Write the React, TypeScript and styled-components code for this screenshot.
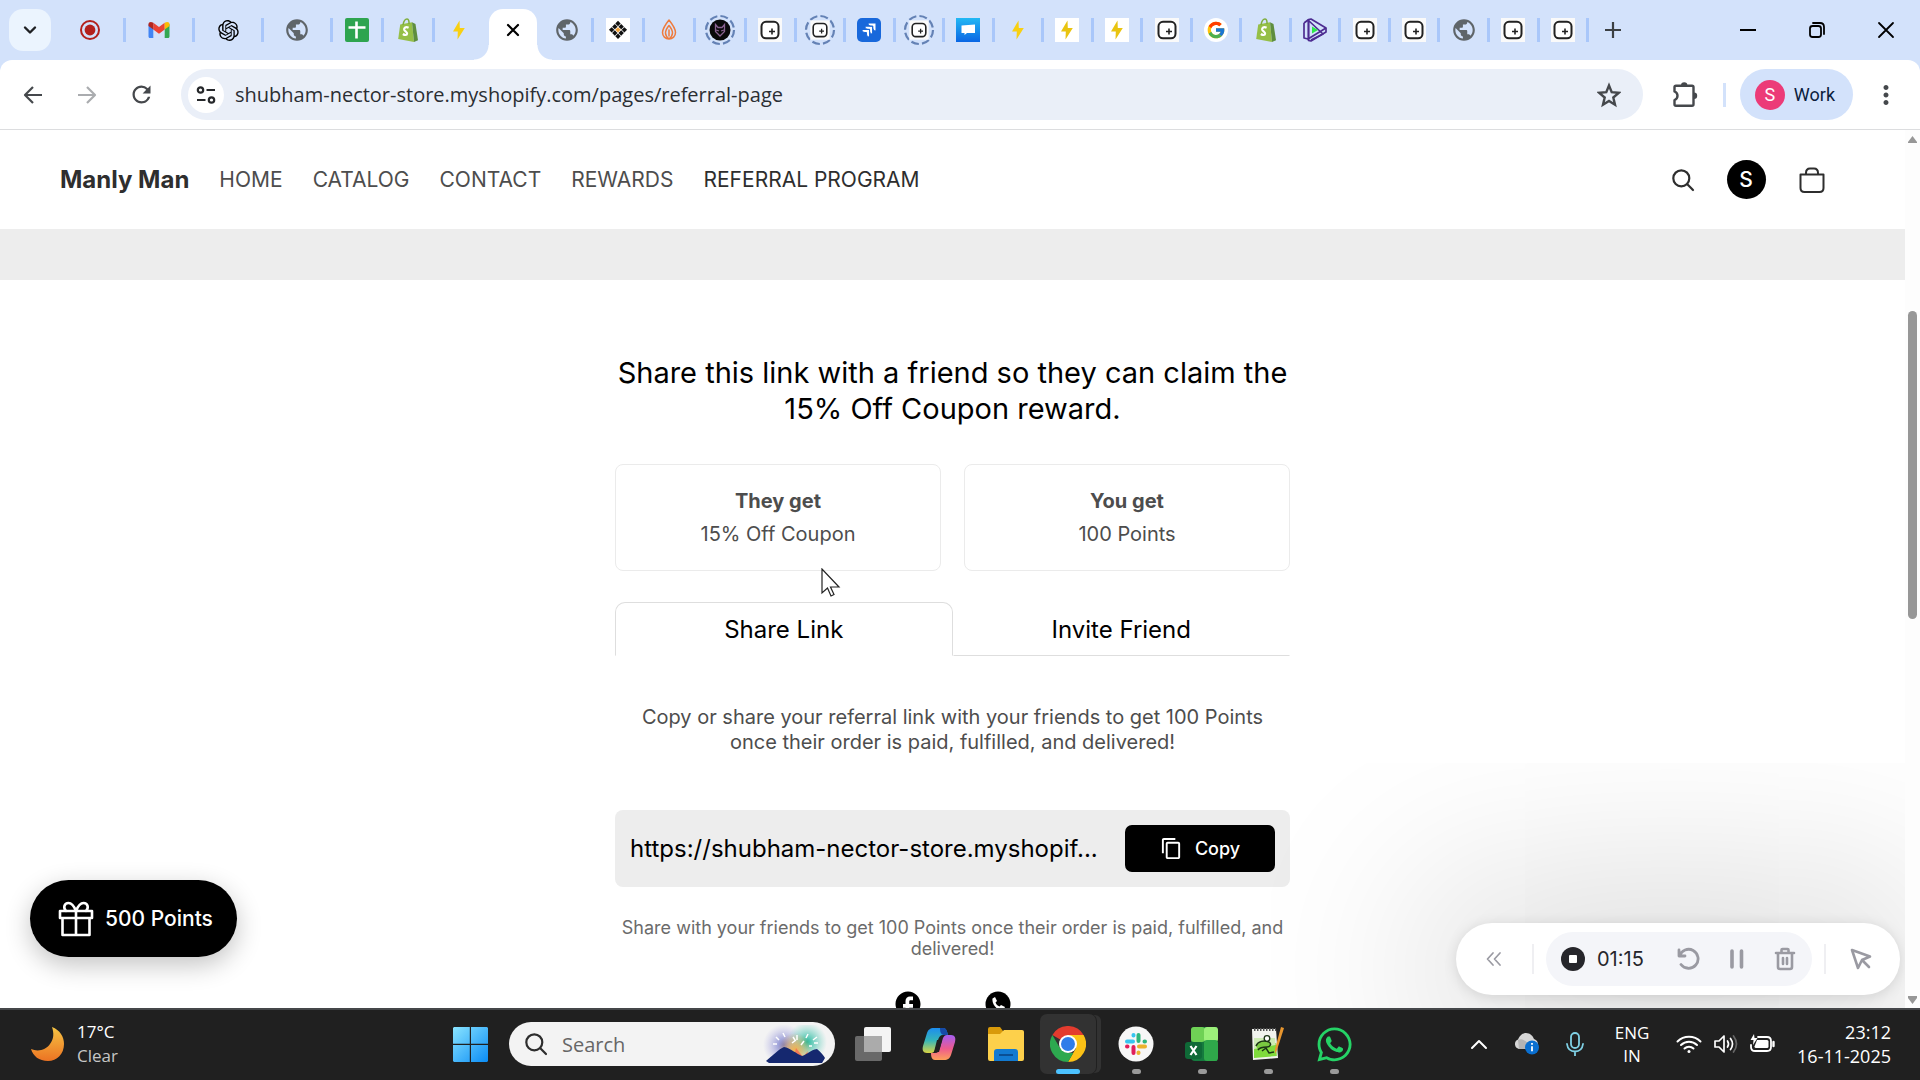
import React from "react";
import styled, { createGlobalStyle, css } from "styled-components";
import { FcGoogle } from "react-icons/fc";
import { RiOpenaiFill } from "react-icons/ri";
import { FaWhatsapp } from "react-icons/fa";
import { MdPublic, MdContentCopy, MdFacebook, MdMoreVert, MdRefresh } from "react-icons/md";

const ui = `"Open Sans", "Noto Sans", sans-serif`;
const store = `Inter, "Liberation Sans", sans-serif`;

const GlobalStyle = createGlobalStyle`
  *, *::before, *::after { box-sizing: border-box; }
  body { margin: 0; font-family: ${store}; background: #fff; overflow: hidden; }
  button, input { font: inherit; color: inherit; border: 0; padding: 0; margin: 0; background: none; outline: none; }
  button { cursor: pointer; }
  a { color: inherit; text-decoration: none; }
  h1, h2, p { margin: 0; }
  svg { display: block; flex: none; }
`;

const Desktop = styled.div`
  height: 100vh;
  display: flex;
  flex-direction: column;
`;

/* ---------- browser chrome ---------- */
const TabStrip = styled.div`
  height: 60px;
  flex: none;
  display: flex;
  align-items: center;
  background: #d3e2fb;
  padding-left: 9px;
`;
const TabSearch = styled.button`
  width: 42px;
  height: 42px;
  margin-right: 6px;
  border-radius: 14px;
  background: #ebf4fe;
  display: grid;
  place-items: center;
`;
const Tab = styled.button<{ $width?: number; $last?: boolean }>`
  ${(p) => (p.$width ? `width: ${p.$width}px; flex: none;` : "flex: 1;")}
  height: 24px;
  display: flex;
  align-items: center;
  justify-content: center;
  border-right: 3px solid ${(p) => (p.$last ? "transparent" : "#a9c7fa")};
`;
const EvenTabs = styled.div`
  flex: 0 1 842px;
  display: flex;
`;
const ActiveTab = styled.div`
  position: relative;
  width: 48px;
  height: 51px;
  margin: 0 6px 0 3px;
  align-self: flex-end;
  flex: none;
  display: flex;
  align-items: center;
  padding-bottom: 9px;
  background: #fff;
  border-radius: 14px 14px 0 0;
  &::before, &::after {
    content: "";
    position: absolute;
    bottom: 0;
    width: 15px;
    height: 15px;
  }
  &::before { right: 100%; background: radial-gradient(circle at 0 0, transparent 14px, #fff 15px); }
  &::after { left: 100%; background: radial-gradient(circle at 100% 0, transparent 14px, #fff 15px); }
`;
const GhostButton = styled.button<{ $w?: number }>`
  width: ${(p) => p.$w ?? 48}px;
  height: 48px;
  flex: none;
  display: grid;
  place-items: center;
`;
const WindowControls = styled.div`
  margin-left: auto;
  display: flex;
`;
const ToolbarBack = styled.div`
  flex: none;
  background: #d3e2fb;
`;
const Toolbar = styled.div`
  height: 70px;
  display: flex;
  align-items: center;
  padding: 0 10px 0 6px;
  background: #fff;
  border-radius: 12px 12px 0 0;
  border-bottom: 1px solid #dcdddf;
`;
const AddressBar = styled.label`
  flex: 1;
  height: 51px;
  margin: 0 18px 0 13px;
  display: flex;
  align-items: center;
  padding: 0 22px 0 7px;
  border-radius: 26px;
  background: #eaeff8;
`;
const SiteInfo = styled.button`
  width: 36px;
  height: 36px;
  margin-right: 11px;
  border-radius: 50%;
  background: #fff;
  display: grid;
  place-items: center;
`;
const AddressInput = styled.input`
  flex: 1;
  min-width: 0;
  height: 36px;
  font-family: ${ui};
  font-size: 20px;
  color: #2b2e33;
`;
const ToolbarRule = styled.span`
  width: 3px;
  height: 24px;
  margin: 0 14px;
  background: #d3e2fb;
`;
const Profile = styled.button`
  height: 51px;
  display: flex;
  align-items: center;
  gap: 9px;
  padding: 0 18px 0 15px;
  margin-right: 9px;
  border-radius: 26px;
  background: #d3e2fb;
  color: #0b1d3d;
  font-family: Roboto, sans-serif;
  font-size: 18px;
`;
const ProfileBadge = styled.span`
  width: 30px;
  height: 30px;
  border-radius: 50%;
  background: #ec3b78;
  color: #fff;
  display: grid;
  place-items: center;
`;

/* ---------- store page ---------- */
const Viewport = styled.div`
  position: relative;
  flex: 1;
  min-height: 0;
  display: flex;
  overflow: hidden;
  background: #fff;
`;
const Page = styled.div`
  flex: 1;
  min-width: 0;
`;
const ScrollTrack = styled.div`
  width: 15px;
  display: flex;
  flex-direction: column;
  align-items: center;
  padding: 6px 0 4px;
  background: #fdfdfd;
  z-index: 1;
`;
const ScrollSpace = styled.div<{ $grow: number }>`
  flex: ${(p) => p.$grow};
`;
const ScrollThumb = styled.div`
  flex: 309;
  width: 9px;
  border-radius: 5px;
  background: #979797;
`;
const Header = styled.header`
  height: 99px;
  display: flex;
  align-items: center;
  padding: 0 66px 0 60px;
`;
const Brand = styled.a`
  font-size: 24px;
  font-weight: 700;
  color: #2e2e2e;
  margin-right: 30px;
`;
const Nav = styled.nav`
  display: flex;
  gap: 30px;
  font-size: 21px;
  color: #4d4d4d;
`;
const NavLink = styled.a<{ $current?: boolean }>`
  ${(p) => p.$current && css`color: #2e2e2e;`}
`;
const HeaderActions = styled.div`
  margin-left: auto;
  display: flex;
  align-items: center;
  gap: 12px;
`;
const Avatar = styled.span`
  width: 39px;
  height: 39px;
  border-radius: 50%;
  background: #000;
  color: #fff;
  font-size: 21px;
  font-weight: 500;
  display: grid;
  place-items: center;
`;
const Band = styled.div`
  height: 51px;
  background: #ededed;
`;
const Referral = styled.main`
  width: 675px;
  margin: 0 auto;
  padding-top: 75px;
  text-align: center;
`;
const Title = styled.h1`
  font-size: 29px;
  font-weight: 400;
  line-height: 36px;
  color: #000;
`;
const Cards = styled.div`
  display: grid;
  grid-template-columns: 1fr 1fr;
  gap: 23px;
  margin: 37px 0 31px;
`;
const Card = styled.section`
  height: 107px;
  border: 1px solid #ebebeb;
  border-radius: 8px;
  display: flex;
  flex-direction: column;
  justify-content: center;
  gap: 9px;
  font-size: 20px;
  line-height: 24px;
  color: #4d4d4d;
`;
const CardTitle = styled.h2`
  font-size: 20px;
  line-height: 24px;
  font-weight: 700;
`;
const Tabs = styled.div`
  display: grid;
  grid-template-columns: 1fr 1fr;
`;
const TabButton = styled.button<{ $active?: boolean }>`
  height: 54px;
  font-size: 24px;
  color: #000;
  border: 1px solid transparent;
  padding-top: 1px;
  ${(p) => p.$active
    ? css`border-color: #dedede; border-bottom-color: transparent; border-radius: 10px 10px 0 0;`
    : css`border-bottom-color: #dedede;`}
`;
const Lead = styled.p`
  margin: 49px 0 55px;
  padding: 0 18px;
  font-size: 20px;
  line-height: 25px;
  color: #4d4d4d;
`;
const LinkBox = styled.div`
  height: 77px;
  display: flex;
  align-items: center;
  gap: 15px;
  padding: 0 15px;
  border-radius: 8px;
  background: #ededed;
`;
const LinkInput = styled.input`
  flex: 1;
  min-width: 0;
  height: 40px;
  font-size: 24px;
  color: #000;
`;
const CopyButton = styled.button`
  width: 150px;
  height: 47px;
  border-radius: 7px;
  background: #000;
  color: #fff;
  font-size: 18px;
  font-weight: 500;
  display: flex;
  align-items: center;
  justify-content: center;
  gap: 12px;
`;
const Note = styled.p`
  margin: 30px 0;
  font-size: 18px;
  line-height: 21px;
  color: #6b6b6b;
`;
const Socials = styled.div`
  display: flex;
  justify-content: center;
  gap: 60px;
`;
const PointsButton = styled.button`
  position: absolute;
  left: 30px;
  bottom: 51px;
  height: 77px;
  display: flex;
  align-items: center;
  gap: 11px;
  padding: 0 24px 0 28px;
  border-radius: 39px;
  background: #000;
  color: #fff;
  font-size: 21px;
  font-weight: 500;
  box-shadow: 0 8px 26px rgba(0, 0, 0, 0.24);
`;
const Pointer = styled.svg`
  position: absolute;
  left: 821px;
  top: 438px;
`;

/* ---------- screen recorder ---------- */
const Recorder = styled.div`
  position: absolute;
  right: 20px;
  bottom: 13px;
  width: 444px;
  height: 72px;
  display: flex;
  align-items: center;
  border-radius: 36px;
  background: #fff;
  color: #9a9aa2;
  box-shadow: 0 2px 14px rgba(0, 0, 0, 0.12), 0 10px 190px 40px rgba(0, 0, 0, 0.17);
`;
const RecorderRule = styled.span`
  width: 2px;
  height: 30px;
  background: #efeff2;
`;
const RecorderGroup = styled.div`
  width: 266px;
  height: 54px;
  margin: 0 12px;
  padding-left: 15px;
  display: flex;
  align-items: center;
  border-radius: 27px;
  background: #f4f5f9;
`;
const RecorderTime = styled.time`
  width: 80px;
  padding-left: 12px;
  font-size: 20px;
  color: #26262b;
`;

/* ---------- taskbar ---------- */
const Taskbar = styled.footer`
  height: 72px;
  flex: none;
  display: flex;
  align-items: center;
  padding-bottom: 2px;
  border-top: 2px solid #45474a;
  background: #202020;
  color: #fff;
  font-family: ${ui};
`;
const Weather = styled.button`
  flex: 0 1 437px;
  display: flex;
  align-items: center;
  gap: 12px;
  padding-left: 30px;
  font-size: 17px;
  line-height: 24px;
  text-align: left;
`;
const Muted = styled.span`
  display: block;
  color: #c6c6c6;
`;
const Apps = styled.div`
  display: flex;
  align-items: center;
`;
const AppButton = styled.button<{ $w: number; $state?: "open" | "active" }>`
  position: relative;
  width: ${(p) => p.$w}px;
  height: 60px;
  display: grid;
  place-items: center;
  &::after {
    content: "";
    position: absolute;
    bottom: 0;
    left: calc(50% - ${(p) => (p.$state === "active" ? 12 : 4)}px);
    width: ${(p) => (p.$state === "active" ? 24 : 9)}px;
    height: 5px;
    border-radius: 3px;
    background: ${(p) => (p.$state === "active" ? "#4cc2ff" : p.$state ? "#9a9a9a" : "transparent")};
  }
  ${(p) => p.$state === "active" && css`
    margin: 0 7px 0 1px;
    background: #323232;
    border-radius: 7px;
    box-shadow: 1px 0 0 #202020, 6px 0 0 -1px #323232;
  `}
`;
const SearchBox = styled.label`
  width: 326px;
  height: 44px;
  margin: 0 4px 0 6px;
  padding: 0 8px 0 15px;
  display: flex;
  align-items: center;
  gap: 14px;
  border-radius: 22px;
  background: #f3f3f3;
  overflow: hidden;
`;
const SearchInput = styled.input`
  flex: 1;
  min-width: 0;
  font-size: 20px;
  color: #222;
  &::placeholder { color: #666; opacity: 1; }
`;
const Tray = styled.div`
  display: flex;
  align-items: center;
  margin-left: auto;
  padding-right: 29px;
`;
const Language = styled.button`
  width: 66px;
  font-size: 17px;
  line-height: 23px;
  text-align: center;
`;
const Quick = styled.button`
  display: flex;
  align-items: center;
  gap: 11px;
  margin-left: 11px;
`;
const Clock = styled.button`
  width: 116px;
  font-size: 18px;
  line-height: 24px;
  text-align: right;
`;

/* ---------- icons ---------- */
const stroke = { fill: "none", stroke: "currentColor", strokeLinecap: "round", strokeLinejoin: "round" } as const;

const RecordFav = () => (
  <svg width="24" height="24"><circle cx="12" cy="12" r="9" fill="none" stroke="#b3201c" strokeWidth="2" /><circle cx="12" cy="12" r="5.4" fill="#b3201c" /></svg>
);
const Gmail = () => (
  <svg width="24" height="24" viewBox="0 0 24 24">
    <path d="M1.5 6v12.5c0 .8.6 1.5 1.4 1.5h3.4V10z" fill="#4285f4" /><path d="M17.7 10v10h3.4c.8 0 1.4-.7 1.4-1.500V6z" fill="#34a853" />
    <path d="M6.3 4.8v6.7L12 15.8l5.7-4.3V4.8L12 9z" fill="#ea4335" /><path d="M1.5 6v2l4.800 3.500V4.800C4.300 3.300 1.500 3.600 1.500 6z" fill="#b3261e" />
    <path d="M17.700 4.800v6.700L22.500 8V6c0-2.400-2.800-2.700-4.800-1.200z" fill="#fbbc04" />
  </svg>
);
const Sheet = () => (
  <svg width="24" height="24"><rect width="24" height="24" rx="2" fill="#2ea44f" /><path d="M11.500 3.500v17M3.500 9.500h17" stroke="#fff" strokeWidth="2.600" /></svg>
);
const Shop = () => (
  <svg width="24" height="24" viewBox="0 0 24 24">
    <path d="M4.200 6.500 16 4.200 18 24 2.200 21z" fill="#95bf47" /><path d="M16 4.200 19.500 6 22 22.200 18 24z" fill="#5e8e3e" />
    <path d="M7 7c.6-3.400 2.300-6 4-6s2.200 2.500 2 5" fill="none" stroke="#7fae3c" strokeWidth="1.500" />
    <path d="M12.600 9.700c-3-1.400-4.800.2-4.400 2 .4 1.600 3.100 2 2.900 4-.2 1.700-2.300 1.700-4.200.3" fill="none" stroke="#fff" strokeWidth="2.200" />
  </svg>
);
const Bolt = ({ framed }: { framed?: boolean }) => (
  <svg width="24" height="24">{framed && <rect width="24" height="24" fill="#fff" />}<path d="M12.500 2.500 6 13.500h4.800L10.500 21.500 17.800 10h-5z" fill={framed ? "#e9c410" : "#f8d012"} /></svg>
);
const Diamond = () => (
  <svg width="24" height="24"><rect width="24" height="24" fill="#fff" />
    <g transform="rotate(45 12 12)">{[0, 1, 2].map((r) => [0, 1, 2].map((c) => (
      <rect key={`${r}${c}`} x={5.500 + c * 4.500} y={5.500 + r * 4.500} width="3.800" height="3.800" fill={r === 1 && c === 1 ? "#f2a33a" : "#111"} />)))}</g>
  </svg>
);
const Flame = () => (
  <svg width="24" height="24" {...stroke} color="#ee7b3d" strokeWidth="1.500">
    <path d="M12 2C8 7 5.500 10.500 5.500 14.500a6.500 6.500 0 0 0 13 0C18.500 10.500 16 7 12 2zM12 7.500c-2.500 3-3.500 5-3.500 7.500 0 3 3.500 6 3.500 6s3.500-3 3.500-6c0-2.500-1-4.500-3.500-7.500zM12 12v6" />
  </svg>
);
const Ring = ({ children }: { children: React.ReactNode }) => (
  <svg width="32" height="32" viewBox="-4 -4 32 32"><circle cx="12" cy="12" r="14" fill="none" stroke="#6482b5" strokeWidth="2.200" strokeDasharray="7.800 3.200" />{children}</svg>
);
const Fox = () => (
  <Ring><circle cx="12" cy="12" r="10.500" fill="#090909" /><path d="m7.500 6.500 2.500 3h4l2.500-3v7L12 18l-4.500-4.500zM8 12l3 1m5-1-3 1" fill="none" stroke="#88618f" strokeWidth="1.300" /></Ring>
);
const squareShapes = (s: number) => (
  <g transform={`translate(${12 - 12 * s} ${12 - 12 * s}) scale(${s})`}>
    <rect width="24" height="24" fill="#fafafa" /><rect x="3.500" y="3.800" width="17" height="16.500" rx="4.500" fill="#fff" stroke="#222" strokeWidth="2" /><path d="M14 10.500v6M11 13.500h6" stroke="#222" strokeWidth="1.600" />
  </g>
);
const Square = () => <svg width="24" height="24">{squareShapes(1)}</svg>;
const Jira = () => (
  <svg width="24" height="24"><rect width="24" height="24" rx="5" fill="#1868db" />
    <path d="M11 5h8v8c-2 0-3.200-1.300-3.200-3.200V8.200h-1.600C12.300 8.200 11 7 11 5zM8 8.200h7.600v7.800c-2 0-3-1.300-3-3v-1.700h-1.600c-1.800 0-3-1.200-3-3.100zM5 11.500h7.500V19c-2 0-3-1.200-3-3v-1.500H8c-1.900 0-3-1.200-3-3z" fill="#fff" stroke="#1868db" strokeWidth="1" /></svg>
);
const Chat = () => (
  <svg width="24" height="24"><defs><linearGradient id="chat" x2="0" y2="1"><stop stopColor="#22b8f4" /><stop offset="1" stopColor="#0a66e4" /></linearGradient></defs>
    <rect width="24" height="24" fill="url(#chat)" /><path d="M5.500 7.500 19 6.500v8.500h-8l-2.500 2v-2h-3z" fill="#fff" /></svg>
);
const PlayTri = () => (
  <svg width="24" height="24" fill="none" stroke="#4d2c91" strokeWidth="1.700" strokeLinejoin="round">
    <path d="M5.500 1.500 8 1l15 9v4L8 23l-2.500-.5z" /><path d="M1 5l4-3 15 14-12 6M1 5v15l4 1L23 10M5.500 2v20" /><path d="M9 8.500v7l6-3.500z" fill="#2bea49" stroke="none" />
  </svg>
);
const Globe = () => <MdPublic size={26} color="#5f6569" />;
const Magnifier = ({ size, color }: { size: number; color: string }) => (
  <svg width={size} height={size} viewBox="0 0 24 24" {...stroke} color={color} strokeWidth="2.200"><circle cx="10.300" cy="10.300" r="8" /><path d="m16.300 16.300 5.700 5.700" /></svg>
);
const Star = () => (
  <svg width="24" height="26" viewBox="0 0 24 26" fill="none" stroke="#45484c" strokeWidth="2.400"><path d="m12 3.500 2.700 6.700 7 .6-5.400 4.700 1.700 7.200L12 18.900l-6 3.800 1.700-7.200-5.400-4.700 7-.6z" /></svg>
);
const Puzzle = () => (
  <svg width="26" height="26" viewBox="0 0 26 26">
    <path d="M2.500 5.200q0-1.500 1.500-1.500h16q1.500 0 1.500 1.500v17q0 1.500-1.500 1.500H4q-1.500 0-1.500-1.500V18c4-1.500 4-7 0-8.500z" fill="none" stroke="#45484c" strokeWidth="2.400" strokeLinejoin="round" />
    <path d="M9 3.500a3.200 3.200 0 0 1 6.400 0zM22 10.500a3.200 3.200 0 0 1 0 6.400z" fill="#45484c" />
  </svg>
);
const Chrome = () => (
  <svg width="36" height="36" viewBox="0 0 48 48">
    <path d="M24 24 3.200 12A24 24 0 0 1 44.800 12z" fill="#e33b2e" />
    <path d="M24 12h20.800A24 24 0 0 1 24 48l10.400-18z" fill="#fbc116" />
    <path d="M3.200 12l10.400 18L24 36h7L24 48A24 24 0 0 1 3.200 12z" fill="#2da94f" /><circle cx="24" cy="24" r="12" fill="#fff" /><circle cx="24" cy="24" r="9.300" fill="#2f7de9" />
  </svg>
);
const Slack = () => (
  <svg width="36" height="36" viewBox="0 0 36 36"><circle cx="18" cy="18" r="17.500" fill="#f7f7f7" />
    <g strokeWidth="4" strokeLinecap="round">
      <path d="M9 15.500h6M15.500 9v.5" stroke="#36c5f0" /><path d="M20.500 9v6M27 15.500h-.5" stroke="#2eb67d" />
      <path d="M27 20.500h-6M20.500 27v-.5" stroke="#ecb22e" /><path d="M15.500 27v-6M9 20.500h.5" stroke="#e01e5a" />
    </g>
  </svg>
);
const Excel = () => (
  <svg width="34" height="36" viewBox="0 0 34 36">
    <path d="M8 1h24v34H10a4 4 0 0 1-4-4V3z" fill="#157a3e" /><rect x="6" y="1" width="14" height="15" rx="3" fill="#6fd155" /><rect x="19" y="1" width="14" height="15" rx="3" fill="#9cf07a" /><rect x="19" y="14" width="14" height="21" rx="3" fill="#2fa84a" />
    <rect x="0" y="16" width="17" height="17" rx="3" fill="#0f6a37" /><path d="m5.500 20 6 9M11.500 20l-6 9" stroke="#fff" strokeWidth="2.200" />
  </svg>
);
const Notepad = () => (
  <svg width="36" height="36" viewBox="0 0 36 36">
    <path d="M2 3h24l2 29-25 2z" fill="#f1f3ee" /><path d="M4 22 26 17l.8 13L4 32z" fill="#7fdb3c" /><path d="M4 12h21l.6 7L4 23z" fill="#cdebb4" /><path d="M4 3.500h22" stroke="#555" strokeWidth="3" strokeDasharray="1.500 1.500" />
    <path d="M6 20c2-5 8-6 13-4 3 2 1 5-2 5s-7 0-9 3" fill="#79c940" stroke="#1c3416" strokeWidth="1.500" /><circle cx="17" cy="12.500" r="2.800" fill="#fff" stroke="#1c3416" strokeWidth="1.300" /><path d="M12 25l4-3 3 5 5-1" fill="none" stroke="#1c3416" strokeWidth="1.500" />
    <path d="M34 2 27 24l-2 4v-5L31 1z" fill="#e8962e" />
  </svg>
);
const WinLogo = () => (
  <svg width="35" height="35"><defs><linearGradient id="win" x2="1" y2="1"><stop stopColor="#8ae4ff" /><stop offset="1" stopColor="#0a8cf5" /></linearGradient></defs>
    <path d="M1 0h15.800v16.800H0V1zM18 0h16l1 1v15.800H18zM0 18h16.800v17H1l-1-1zM18 18h17v16l-1 1H18z" fill="url(#win)" /></svg>
);
const Fireworks = () => (
  <svg width="64" height="38" viewBox="0 0 64 38"><defs>
    <radialGradient id="fa"><stop stopColor="#6f76c8" /><stop offset="1" stopColor="#b3b0e6" stopOpacity="0" /></radialGradient>
    <radialGradient id="fb"><stop stopColor="#22b79c" /><stop offset="1" stopColor="#6fd3c4" stopOpacity="0" /></radialGradient>
    <radialGradient id="fc"><stop stopColor="#f3b24c" /><stop offset="1" stopColor="#f3b24c" stopOpacity="0" /></radialGradient></defs>
    <circle cx="21" cy="20" r="21" fill="url(#fa)" /><circle cx="44" cy="17" r="20" fill="url(#fb)" /><circle cx="32" cy="25" r="17" fill="url(#fc)" />
    <path d="M34 10v5M30 12l2 3M45 9l-2 4M54 12l-4 3M55 18h-4M13 12l3 3M20 8l2 4M10 19h4M29 18l4-3M38 20l3-4M46 21h3" stroke="#fff" strokeWidth="1.500" />
    <path d="M33 23l7 9 5-6-3 10H30z" fill="#f37a56" /><path d="M3 36c6-5 13-12 18-14 6 1 13 7 18 9 6-2 8-6 15-7 4 3 7 7 8 9l-3 5H6z" fill="#15286f" />
  </svg>
);
const TaskView = () => (
  <svg width="36" height="36"><rect x="9" y="1" width="27" height="25" rx="2" fill="#f4f4f4" /><rect x="0" y="10" width="27" height="25" rx="2" fill="#777" opacity=".85" /><path d="M9 10h18v16H9z" fill="#ababab" /></svg>
);
const Copilot = () => (
  <svg width="34" height="34" viewBox="0 0 34 34"><defs>
    <linearGradient id="ca" x2="0" y2="1"><stop stopColor="#1c8df0" /><stop offset=".5" stopColor="#36b6b8" /><stop offset="1" stopColor="#d9d443" /></linearGradient>
    <linearGradient id="cb" x2="0" y2="1"><stop stopColor="#a45df2" /><stop offset=".55" stopColor="#ee5b8d" /><stop offset="1" stopColor="#fda05a" /></linearGradient></defs>
    <path d="M12 1h9c3 0 4 3 5 7h-5c-3 0-4 2-5 5l-3 10c-1 2-2 3-4 3H5c-4 0-5-3-4-7L5 6c1-3 3-5 7-5z" fill="url(#ca)" />
    <path d="M22 33h-9c-3 0-4-3-4-7h4c3 0 4-2 5-5l3-10c1-2 2-3 4-3h4c4 0 5 3 4 7l-4 13c-1 3-3 5-7 5z" fill="url(#cb)" /><path d="M18 1h4c2 0 3 3 4 7h-4c-3 0-4-3-4-7z" fill="#164ba8" />
    <path d="M15 13h5l-3 12h-5z" fill="#202020" />
  </svg>
);
const Folder = () => (
  <svg width="36" height="36"><path d="M0 3q0-2 2-2h10l3 4h19q2 0 2 2v6H0z" fill="#d99a0a" /><path d="M0 8h12l4-4h18q2 0 2 2v27q0 2-2 2H2q-2 0-2-2z" fill="#fdd04b" /><path d="M6 35V26q0-3 3-3h18q3 0 3 3v9z" fill="#127ad1" /><path d="M11 29h14" stroke="#0a4f94" strokeWidth="2" /></svg>
);
const Social = ({ name }: { name: "facebook" | "phone" }) =>
  name === "facebook" ? <MdFacebook size={30} color="#000" /> : (
    <svg width="30" height="30" viewBox="0 0 30 30"><circle cx="15" cy="15" r="12.500" /><path d="M9.500 9.500 12 8l2 4-1.500 1.500c.7 2 2 3.200 4 4L18 16l4 2-1.500 3c-6 1.200-12-5.500-11-11.500z" fill="#fff" /></svg>
  );

const firstTabs: [number, React.ReactNode][] = [
  [69, <RecordFav />], [69, <Gmail />], [69, <RiOpenaiFill size={25} />], [69, <Globe />], [51, <Sheet />], [51, <Shop />], [51, <Bolt />],
];
const nextTabs = [<Globe />, <Diamond />, <Flame />, <Fox />];
const evenTabs = [
  <Square />, <Ring>{squareShapes(0.8)}</Ring>, <Jira />, <Ring>{squareShapes(0.8)}</Ring>, <Chat />, <Bolt />, <Bolt framed />, <Bolt framed />, <Square />,
  <svg width="24" height="24"><circle cx="12" cy="12" r="12" fill="#fff" /><FcGoogle x="2" y="2" size={20} /></svg>,
  <Shop />, <PlayTri />, <Square />, <Square />, <Globe />, <Square />, <Square />,
];
const navItems = ["HOME", "CATALOG", "CONTACT", "REWARDS", "REFERRAL PROGRAM"];

export default function App() {
  return (
    <Desktop>
      <GlobalStyle />
      <TabStrip>
        <TabSearch aria-label="Search tabs"><svg width="14" height="14" {...stroke} strokeWidth="2.400" color="#1f2023"><path d="m2 4.500 5 5 5-5" /></svg></TabSearch>
        {firstTabs.map(([w, icon], i) => <Tab key={i} $width={w} $last={i === 6} aria-label="Tab">{icon}</Tab>)}
        <ActiveTab><GhostButton aria-label="Close tab"><svg width="14" height="14" {...stroke} strokeWidth="2.200"><path d="m2 2 10 10M12 2 2 12" /></svg></GhostButton></ActiveTab>
        {nextTabs.map((icon, i) => <Tab key={i} $width={51} aria-label="Tab">{icon}</Tab>)}
        <EvenTabs>{evenTabs.map((icon, i) => <Tab key={i} aria-label="Tab">{icon}</Tab>)}</EvenTabs>
        <GhostButton aria-label="New tab"><svg width="16" height="16" stroke="#3c4043" strokeWidth="2.200"><path d="M8 0v16M0 8h16" /></svg></GhostButton>
        <WindowControls>
          <GhostButton $w={69} aria-label="Minimise"><svg width="16" height="16" stroke="#000" strokeWidth="2"><path d="M0 8h16" /></svg></GhostButton>
          <GhostButton $w={69} aria-label="Restore"><svg width="18" height="18" {...stroke} strokeWidth="1.800"><rect x="2" y="5" width="11" height="11" rx="2.500" /><path d="M5 2h7q4 0 4 4v7" /></svg></GhostButton>
          <GhostButton $w={69} aria-label="Close window"><svg width="18" height="18" {...stroke} strokeWidth="1.800"><path d="m2 2 14 14M16 2 2 16" /></svg></GhostButton>
        </WindowControls>
      </TabStrip>
      <ToolbarBack>
        <Toolbar>
          <GhostButton $w={54} aria-label="Back"><svg width="20" height="20" {...stroke} strokeLinecap="butt" strokeWidth="2.200" color="#45484c"><path d="M19 10H2M10 2l-8 8 8 8" /></svg></GhostButton>
          <GhostButton $w={54} aria-label="Forward"><svg width="20" height="20" {...stroke} strokeLinecap="butt" strokeWidth="2.200" color="#aaacaf"><path d="M1 10h17M10 2l8 8-8 8" /></svg></GhostButton>
          <GhostButton $w={54} aria-label="Reload"><MdRefresh size={27} color="#45484c" /></GhostButton>
          <AddressBar>
            <SiteInfo aria-label="Site information"><svg width="20" height="20" fill="none" stroke="#26282b" strokeWidth="2.200"><circle cx="4.500" cy="5" r="2.700" /><circle cx="15.500" cy="15" r="2.700" /><path d="M10.500 5H19M1 15h8.500" /></svg></SiteInfo>
            <AddressInput aria-label="Address" readOnly value="shubham-nector-store.myshopify.com/pages/referral-page" />
            <Star />
          </AddressBar>
          <GhostButton aria-label="Extensions"><Puzzle /></GhostButton>
          <ToolbarRule />
          <Profile><ProfileBadge>S</ProfileBadge>Work</Profile>
          <GhostButton aria-label="Menu"><MdMoreVert size={30} color="#45484c" /></GhostButton>
        </Toolbar>
      </ToolbarBack>

      <Viewport>
        <Page>
          <Header>
            <Brand href="#">Manly Man</Brand>
            <Nav>{navItems.map((n) => <NavLink key={n} href="#" $current={n === "REFERRAL PROGRAM"}>{n}</NavLink>)}</Nav>
            <HeaderActions>
              <GhostButton aria-label="Search"><Magnifier size={24} color="#2e2e2e" /></GhostButton>
              <GhostButton $w={54} aria-label="Account"><Avatar>S</Avatar></GhostButton>
              <GhostButton $w={54} aria-label="Cart"><svg width="26" height="28" {...stroke} strokeWidth="2" color="#2e2e2e"><path d="M1.500 8.500h23V22q0 4-4 4h-15q-4 0-4-4zM7 8V7q0-4.500 4-4.500h4q4 0 4 4.500v1" /></svg></GhostButton>
            </HeaderActions>
          </Header>
          <Band />
          <Referral>
            <Title>Share this link with a friend so they can claim the 15% Off Coupon reward.</Title>
            <Cards>
              <Card><CardTitle>They get</CardTitle><p>15% Off Coupon</p></Card>
              <Card><CardTitle>You get</CardTitle><p>100 Points</p></Card>
            </Cards>
            <Tabs role="tablist">
              <TabButton role="tab" aria-selected $active>Share Link</TabButton>
              <TabButton role="tab" aria-selected={false}>Invite Friend</TabButton>
            </Tabs>
            <Lead>Copy or share your referral link with your friends to get 100 Points once their order is paid, fulfilled, and delivered!</Lead>
            <LinkBox>
              <LinkInput aria-label="Referral link" readOnly value="https://shubham-nector-store.myshopif..." />
              <CopyButton><MdContentCopy size={23} />Copy</CopyButton>
            </LinkBox>
            <Note>Share with your friends to get 100 Points once their order is paid, fulfilled, and delivered!</Note>
            <Socials>
              <a href="#" aria-label="Facebook"><Social name="facebook" /></a>
              <a href="#" aria-label="WhatsApp"><Social name="phone" /></a>
            </Socials>
          </Referral>
        </Page>
        <PointsButton>
          <svg width="36" height="36" viewBox="0 0 36 36" {...stroke} strokeWidth="2.600">
            <path d="M2 10h32v7H2zM4.500 17v17h27V17M18 10v24M18 10c-2-5-4-8-7.500-8C6 2 5 7 8 10M18 10c2-5 4-8 7.500-8C30 2 31 7 28 10" />
          </svg>
          500 Points
        </PointsButton>
        <Recorder>
          <GhostButton $w={76} aria-label="Collapse"><svg width="16" height="16" {...stroke} strokeWidth="1.700"><path d="M7 2 1.500 8 7 14M14 2 8.500 8l5.500 6" /></svg></GhostButton>
          <RecorderRule />
          <RecorderGroup>
            <button aria-label="Stop recording"><svg width="24" height="24"><circle cx="12" cy="12" r="12" fill="#26262b" /><rect x="8" y="8" width="8" height="8" rx="1" fill="#fff" /></svg></button>
            <RecorderTime>01:15</RecorderTime>
            <GhostButton aria-label="Restart"><svg width="24" height="24" {...stroke} strokeWidth="2.800"><path d="M2 3v6h6M2.500 9A9.500 9.500 0 1 1 4 17.500" /></svg></GhostButton>
            <GhostButton aria-label="Pause"><svg width="16" height="22" {...stroke} strokeWidth="3.600"><path d="M3 3v16M12.500 3v16" /></svg></GhostButton>
            <GhostButton aria-label="Delete"><svg width="22" height="24" {...stroke} strokeWidth="2.600"><path d="M2 6h18M4 6v14q0 2 2 2h10q2 0 2-2V6M7.500 5.500V3q0-1 1-1h5q1 0 1 1v2.500M9 11v6M13 11v6" /></svg></GhostButton>
          </RecorderGroup>
          <RecorderRule />
          <GhostButton $w={70} aria-label="Pointer"><svg width="22" height="22" {...stroke} strokeWidth="2.600"><path d="m2 2 18 6.500-8 3.500-4 8zM12 12l7 7" /></svg></GhostButton>
        </Recorder>
        <Pointer width="20" height="30"><path d="M1 1v24l5.500-5 3.500 8 3-1.500-3.500-7.500H18z" fill="#fff" stroke="#222" strokeWidth="1.200" /></Pointer>
        <ScrollTrack>
          <svg width="9" height="8"><path d="M4.500 0 9 6v1H0V6z" fill="#979797" /></svg>
          <ScrollSpace $grow={167} />
          <ScrollThumb />
          <ScrollSpace $grow={377} />
          <svg width="9" height="8"><path d="M0 0h9v2L4.500 8 0 2z" fill="#979797" /></svg>
        </ScrollTrack>
      </Viewport>

      <Taskbar>
        <Weather>
          <svg width="35" height="36"><defs><linearGradient id="moon" x2="0" y2="1"><stop stopColor="#f6c443" /><stop offset="1" stopColor="#ec7323" /></linearGradient></defs><path d="M22 1c8 3 12 10 12 17 0 10-7 17-16 17C9 35 3 30 1 23c7 3 15 1 19-5 4-5 4-11 2-17z" fill="url(#moon)" /></svg>
          <span>17°C<Muted>Clear</Muted></span>
        </Weather>
        <Apps>
          <AppButton $w={66} aria-label="Start"><WinLogo /></AppButton>
          <SearchBox><Magnifier size={24} color="#2d2d2d" /><SearchInput type="search" placeholder="Search" aria-label="Search" /><Fireworks /></SearchBox>
          <AppButton $w={67} aria-label="Task view"><TaskView /></AppButton>
          <AppButton $w={66} aria-label="Copilot"><Copilot /></AppButton>
          <AppButton $w={67} aria-label="File Explorer"><Folder /></AppButton>
          <AppButton $w={56} $state="active" aria-label="Chrome"><Chrome /></AppButton>
          <AppButton $w={66} $state="open" aria-label="Slack"><Slack /></AppButton>
          <AppButton $w={66} $state="open" aria-label="Excel"><Excel /></AppButton>
          <AppButton $w={66} $state="open" aria-label="Notepad++"><Notepad /></AppButton>
          <AppButton $w={66} $state="open" aria-label="WhatsApp"><FaWhatsapp size={39} color="#25d366" /></AppButton>
        </Apps>
        <Tray>
          <GhostButton aria-label="Hidden icons"><svg width="18" height="12" {...stroke} strokeWidth="2"><path d="m2 10 7-7 7 7" /></svg></GhostButton>
          <GhostButton aria-label="OneDrive"><svg width="26" height="24" viewBox="0 0 26 24"><path d="M5 17a5 5 0 0 1-1-9.500C6 3 9 1 12 1c4 0 7 3 8 6 3 1 4 3 4 6l-6 4z" fill="#d6d6d6" /><path d="M4 8c4-2 7 0 10 4l-3 5H5" fill="#b4b4b4" /><circle cx="18" cy="15.500" r="7" fill="#0a6fd0" /><path d="M18 11v1.800M18 14.200v5" stroke="#fff" strokeWidth="1.800" /></svg></GhostButton>
          <GhostButton aria-label="Microphone"><svg width="18" height="24" {...stroke} strokeWidth="1.800" color="#7fd0e4"><rect x="5" y="1" width="8" height="15" rx="4" /><path d="M1 12q1 7.500 8 7.500t8-7.500M9 19.500V24" /></svg></GhostButton>
          <Language>ENG<br />IN</Language>
          <Quick aria-label="Quick settings">
            <svg width="26" height="20" {...stroke} strokeWidth="2"><path d="M1.500 7.500a16.500 16.500 0 0 1 23 0M5 11a11.500 11.500 0 0 1 16 0M8.500 14.500a6.500 6.500 0 0 1 9 0" /><circle cx="13" cy="17.500" r="1.500" fill="#fff" stroke="none" /></svg>
            <svg width="25" height="20" {...stroke} strokeWidth="1.700"><path d="M2 7h4l5-5v16l-5-5H2zM14.500 7q2 3 0 6M17.500 4.500q4 5.500 0 11" /><path d="M20.500 2q6 8 0 16" stroke="#666" /></svg>
            <svg width="26" height="20" {...stroke} strokeWidth="1.800"><path d="M9 3h9q4 0 4 4v6q0 4-4 4H6q-4 0-4-4v-2" /><path d="M8 6h10q1.500 0 1.500 1.500v5q0 1.500-1.500 1.500H7q-1.500 0-1.500-1.500z" fill="#fff" stroke="none" /><path d="M5 0 1.500 6h3L4 11l4.500-7h-3z" fill="#fff" stroke="none" /><path d="M24.500 8v4" strokeWidth="2.400" /></svg>
          </Quick>
          <Clock>23:12<br />16-11-2025</Clock>
        </Tray>
      </Taskbar>
    </Desktop>
  );
}
